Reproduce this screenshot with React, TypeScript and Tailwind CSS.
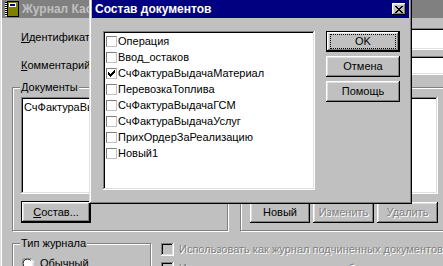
import React from "react";

const raised =
  "shadow-[inset_-1px_-1px_0_#000,inset_1px_1px_0_#fff,inset_-2px_-2px_0_#808080,inset_2px_2px_0_#dfdfdf]";
const sunken =
  "shadow-[inset_-1px_-1px_0_#fff,inset_1px_1px_0_#808080,inset_-2px_-2px_0_#dfdfdf,inset_2px_2px_0_#000]";
const etched = "border border-[#808080] shadow-[inset_1px_1px_0_#fff,1px_1px_0_#fff]";
const disabledText = "text-[#808080] [text-shadow:1px_1px_0_#fff]";

function LedgerIcon() {
  return (
    <svg width="16" height="16" viewBox="0 0 16 16" shapeRendering="crispEdges">
      <rect x="3" y="0" width="12" height="16" fill="#000" />
      <rect x="4" y="1" width="10" height="14" fill="#808000" />
      <rect x="5" y="2" width="7" height="4" fill="#fff" />
      <rect x="6" y="3" width="5" height="2" fill="#000080" />
      {[1, 3, 5, 7, 9, 11, 13].map((y) => (
        <rect key={y} x="1" y={y} width="2" height="1" fill="#000" />
      ))}
      {[2, 4, 6, 8, 10, 12, 14].map((y) => (
        <rect key={y} x="1" y={y} width="2" height="1" fill="#fff" />
      ))}
    </svg>
  );
}

function CheckMark() {
  const px: [number, number][] = [
    [6, 0],
    [5, 1], [6, 1],
    [0, 2], [4, 2], [5, 2], [6, 2],
    [0, 3], [1, 3], [3, 3], [4, 3], [5, 3],
    [0, 4], [1, 4], [2, 4], [3, 4], [4, 4],
    [1, 5], [2, 5], [3, 5],
    [2, 6],
  ];
  return (
    <svg width="7" height="7" viewBox="0 0 7 7" shapeRendering="crispEdges">
      {px.map(([x, y]) => (
        <rect key={`${x}-${y}`} x={x} y={y} width="1" height="1" fill="#000" />
      ))}
    </svg>
  );
}

function CloseX() {
  const rows = ["XX....XX", ".XX..XX.", "..XXXX..", "...XX...", "..XXXX..", ".XX..XX.", "XX....XX"];
  return (
    <svg width="8" height="7" viewBox="0 0 8 7" shapeRendering="crispEdges">
      {rows.flatMap((r, y) =>
        r.split("").map((c, x) =>
          c === "X" ? <rect key={`${x}-${y}`} x={x} y={y} width="1" height="1" fill="#000" /> : null
        )
      )}
    </svg>
  );
}

function Radio() {
  return (
    <svg width="12" height="12" viewBox="0 0 12 12">
      <circle cx="6" cy="6" r="5.5" fill="#fff" />
      <path d="M1.2 9.5 A5.5 5.5 0 0 1 9.5 1.2" stroke="#808080" strokeWidth="1" fill="none" />
      <path d="M2.3 8.6 A4.3 4.3 0 0 1 8.6 2.3" stroke="#000" strokeWidth="1" fill="none" />
      <path d="M10.8 2.5 A5.5 5.5 0 0 1 2.5 10.8" stroke="#fff" strokeWidth="1" fill="none" />
      <path d="M9.7 3.4 A4.3 4.3 0 0 1 3.4 9.7" stroke="#dfdfdf" strokeWidth="1" fill="none" />
    </svg>
  );
}

const items: { label: string; checked?: boolean }[] = [
  { label: "Операция" },
  { label: "Ввод_остаков" },
  { label: "СчФактураВыдачаМатериал", checked: true },
  { label: "ПеревозкаТоплива" },
  { label: "СчФактураВыдачаГСМ" },
  { label: "СчФактураВыдачаУслуг" },
  { label: "ПрихОрдерЗаРеализацию" },
  { label: "Новый1" },
];

export default function App() {
  return (
    <div className="relative w-[443px] h-[266px] overflow-hidden bg-[#c0c0c0] font-['Liberation_Sans',Arial,sans-serif] text-[11px] leading-[13px] text-black">
      {/* Background window */}
      <div className="w-[480px] h-[266px] border-l border-[#dfdfdf]">
        <div className="h-full border-l border-white flex flex-col">
          <div className="h-[18px] shrink-0 bg-[#808080] flex items-center pl-[2px] gap-[2px]">
            <LedgerIcon />
            <span className="font-bold text-[12px] text-[#c0c0c0] leading-[18px] whitespace-nowrap">Журнал Касса</span>
          </div>

          <div className="mt-[10px] flex items-start">
            <div className="ml-[19px] w-[84px] pt-[3px] whitespace-nowrap">
              <span className="underline">И</span>дентификатор
            </div>
            <div className={`h-[22px] flex-1 bg-white ${sunken}`} />
          </div>

          <div className="mt-[6px] flex items-start">
            <div className="ml-[19px] w-[84px] pt-[3px] whitespace-nowrap">
              <span className="underline">К</span>омментарий
            </div>
            <div className={`h-[19px] flex-1 bg-white ${sunken}`} />
          </div>

          <div className="mt-[12px] flex items-start">
            <div className={`relative ml-[10px] w-[216px] h-[144px] shrink-0 ${etched} pl-[8px] pt-[9px]`}>
              <span className="absolute left-[7px] top-[-7px] px-[1px] bg-[#c0c0c0]">Документы</span>
              <div className={`w-[197px] h-[97px] bg-white ${sunken} p-[2px]`}>
                <div className="pl-[1px] pt-[2px] whitespace-nowrap">СчФактураВыдачаМатериал</div>
              </div>
              <button
                className={`mt-[7px] w-[70px] h-[22px] border border-black bg-[#c0c0c0] ${raised} flex items-center justify-center`}
              >
                <span>
                  <span className="underline">С</span>остав...
                </span>
              </button>
            </div>

            <div className={`relative ml-[12px] w-[208px] h-[144px] shrink-0 ${etched} pl-[9px] pt-[9px]`}>
              <div className={`w-[188px] h-[97px] bg-white ${sunken}`} />
              <div className="mt-[8px] flex gap-[3px]">
                <button className={`w-[60px] h-[21px] bg-[#c0c0c0] ${raised} flex items-center justify-center`}>
                  Новый
                </button>
                <button className={`w-[61px] h-[21px] bg-[#c0c0c0] ${raised} flex items-center justify-center ${disabledText}`}>
                  Изменить
                </button>
                <button className={`w-[61px] h-[21px] bg-[#c0c0c0] ${raised} flex items-center justify-center ${disabledText}`}>
                  Удалить
                </button>
              </div>
            </div>
          </div>

          <div className="mt-[12px] flex items-start">
            <div className={`relative ml-[10px] w-[139px] h-[40px] shrink-0 ${etched} pl-[9px] pt-[13px]`}>
              <span className="absolute left-[7px] top-[-7px] px-[1px] bg-[#c0c0c0]">Тип журнала</span>
              <div className="flex items-center gap-[6px]">
                <Radio />
                <span>Обычный</span>
              </div>
            </div>
            <div className="ml-[10px] flex flex-col gap-[6px]">
              <div className="flex items-start">
                <div className={`w-[13px] h-[13px] shrink-0 bg-[#c0c0c0] ${sunken}`} />
                <span className={`ml-[5px] whitespace-nowrap ${disabledText}`}>
                  Использовать как журнал подчиненных документов
                </span>
              </div>
              <div className="flex items-start">
                <div className={`w-[13px] h-[13px] shrink-0 bg-[#c0c0c0] ${sunken}`} />
                <span className={`ml-[5px] whitespace-nowrap ${disabledText}`}>
                  Использовать как журнал для выбора
                </span>
              </div>
            </div>
          </div>
        </div>
      </div>

      {/* Modal dialog */}
      <div className="absolute left-[89px] top-[-3px] w-[323px] h-[207px] bg-[#c0c0c0] p-[3px] flex flex-col shadow-[inset_-1px_-1px_0_#000,inset_1px_1px_0_#dfdfdf,inset_-2px_-2px_0_#808080,inset_2px_2px_0_#fff]">
        <div className="h-[18px] shrink-0 bg-[#000080] flex items-center justify-between pl-[3px] pr-[3px]">
          <span className="font-bold text-[12px] text-white leading-[18px] whitespace-nowrap">Состав документов</span>
          <div className={`w-[14px] h-[12px] bg-[#c0c0c0] ${raised} flex items-center justify-center`}>
            <CloseX />
          </div>
        </div>
        <div className="flex items-start pl-[11px] pt-[13px]">
          <div className={`w-[212px] h-[159px] shrink-0 bg-white ${sunken} p-[2px]`}>
            {items.map((it) => (
              <div key={it.label} className="h-[16px] flex items-center pl-[1px] whitespace-nowrap">
                <div className="w-[11px] h-[11px] shrink-0 bg-white border border-[#808080] border-r-[#c0c0c0] border-b-[#c0c0c0] flex items-center justify-center">
                  {it.checked ? <CheckMark /> : null}
                </div>
                <span className="ml-[1px]">{it.label}</span>
              </div>
            ))}
          </div>
          <div className="ml-[11px] flex flex-col gap-[4px]">
            <button className={`w-[74px] h-[21px] border border-black bg-[#c0c0c0] ${raised} px-[3px] py-[2px] flex`}>
              <span className="flex-1 border border-dotted border-black flex items-center justify-center">OK</span>
            </button>
            <button className={`w-[74px] h-[21px] bg-[#c0c0c0] ${raised} flex items-center justify-center`}>
              Отмена
            </button>
            <button className={`w-[74px] h-[21px] bg-[#c0c0c0] ${raised} flex items-center justify-center`}>
              Помощь
            </button>
          </div>
        </div>
      </div>
    </div>
  );
}
